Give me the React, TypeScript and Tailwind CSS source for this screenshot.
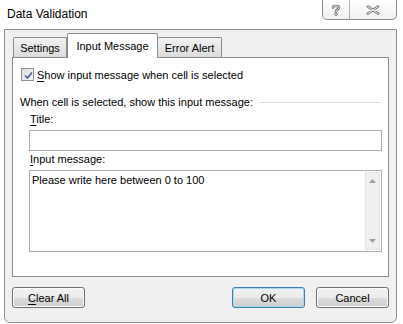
import React from 'react';

function CheckBox() {
  return (
    <div className="w-[13px] h-[13px] border border-[#8f8f8f] bg-gradient-to-br from-[#dcdcdc] to-[#f8f8f8] p-[2px]">
      <svg viewBox="0 0 9 9" className="w-[9px] h-[9px] block">
        <path d="M1 4.5 L3.5 7 L8 1.5" fill="none" stroke="#4a5f97" strokeWidth={1.7} />
      </svg>
    </div>
  );
}

function WinButton({ children, isDefault }: { children: React.ReactNode; isDefault?: boolean }) {
  return (
    <div
      className={`w-[73px] h-[21px] rounded-[3px] border flex items-center justify-center bg-[linear-gradient(#f2f2f2_0%,#ebebeb_50%,#dddddd_51%,#cfcfcf_100%)] ${
        isDefault
          ? 'border-[#3c7fb1] shadow-[inset_0_0_0_1px_#a8d8f0]'
          : 'border-[#707070] shadow-[inset_0_0_0_1px_#fbfbfb]'
      }`}
    >
      {children}
    </div>
  );
}

export default function App() {
  return (
    <div className="w-[403px] h-[324px] bg-white overflow-hidden font-['Liberation_Sans',Arial,sans-serif] text-[11px] leading-[16px] text-black">
      {/* Title bar */}
      <div className="flex h-[29px]">
        <div className="pl-[7px] pt-[6px] text-[12px]">Data Validation</div>
        <div className="ml-auto mr-[6px] flex h-[20px] border border-t-0 border-[#8a8a8a] rounded-b-[5px] bg-[linear-gradient(#ffffff,#f0f0f0)]">
          <div className="w-[27px] border-r border-[#b5b5b5] flex items-center justify-center">
            <svg viewBox="0 0 10 12" className="w-[10px] h-[12px]">
              <path d="M2 3.5 C2 1.5 8 1.5 8 3.8 C8 5.5 5 5.5 5 7.5" fill="none" stroke="#6a6a6a" strokeWidth={2.6} strokeLinecap="round" />
              <path d="M2 3.5 C2 1.5 8 1.5 8 3.8 C8 5.5 5 5.5 5 7.5" fill="none" stroke="#ffffff" strokeWidth={1} strokeLinecap="round" />
              <circle cx="5" cy="10.2" r="1.3" fill="#ffffff" stroke="#6a6a6a" strokeWidth={0.9} />
            </svg>
          </div>
          <div className="w-[46px] flex items-center justify-center">
            <svg viewBox="0 0 14 10" className="w-[14px] h-[10px]">
              <path d="M2 1.5 L12 8.5 M12 1.5 L2 8.5" fill="none" stroke="#6a6a6a" strokeWidth={2.6} strokeLinecap="round" />
              <path d="M2 1.5 L12 8.5 M12 1.5 L2 8.5" fill="none" stroke="#ffffff" strokeWidth={1} strokeLinecap="round" />
            </svg>
          </div>
        </div>
      </div>

      {/* Dialog body */}
      <div className="ml-[4px] mr-[6px] h-[294px] border border-[#8e8f8f] rounded-b-[6px] bg-[#f0f0f0] px-[7px] flex flex-col">
        {/* Tabs */}
        <div className="h-[27px] flex items-end pl-[1px] relative z-10">
          <div className="h-[20px] w-[54px] border border-b-0 border-[#898c95] rounded-t-[2px] bg-[linear-gradient(#f2f2f2,#dcdcdc)] flex items-center justify-center">
            Settings
          </div>
          <div className="h-[25px] w-[91px] -mb-px border border-b-0 border-[#898c95] rounded-t-[2px] bg-white flex items-start justify-center pt-[4px]">
            Input Message
          </div>
          <div className="h-[20px] w-[64px] border border-b-0 border-l-0 border-[#898c95] rounded-t-[2px] bg-[linear-gradient(#f2f2f2,#dcdcdc)] flex items-center justify-center">
            Error Alert
          </div>
        </div>

        {/* Tab pane */}
        <div className="h-[220px] border border-[#898c95] bg-white flex flex-col pl-[7px] pr-[6px]">
          <div className="mt-[10px] h-[13px] flex items-center pl-[1px]">
            <CheckBox />
            <span className="ml-[3px]">
              <u className="underline-offset-2">S</u>how input message when cell is selected
            </span>
          </div>
          <div className="mt-[13px] flex items-center">
            <span>When cell is selected, show this input message:</span>
            <div className="flex-1 ml-[6px] mr-[1px] h-px bg-[#d5dfe5]"></div>
          </div>
          <div className="pl-[10px] mt-[1px]">
            <u className="underline-offset-2">T</u>itle:
          </div>
          <div className="ml-[9px] mt-[3px] h-[21px] border border-[#abadb3] bg-white"></div>
          <div className="pl-[10px]">
            <u className="underline-offset-2">I</u>nput message:
          </div>
          <div className="ml-[9px] mt-[3px] h-[82px] border border-[#abadb3] bg-white flex">
            <div className="flex-1 pl-[2px] pt-[1px]">Please write here between 0 to 100</div>
            <div className="w-[15px] m-px border border-[#e3e3e3] bg-[#f0f0f0] flex flex-col items-center justify-between py-[6px]">
              <svg viewBox="0 0 7 4" className="w-[7px] h-[4px]">
                <path d="M0 4 L3.5 0 L7 4 Z" fill="#a0a0a0" />
              </svg>
              <svg viewBox="0 0 7 4" className="w-[7px] h-[4px]">
                <path d="M0 0 L3.5 4 L7 0 Z" fill="#a0a0a0" />
              </svg>
            </div>
          </div>
        </div>

        {/* Buttons */}
        <div className="mt-[10px] flex">
          <WinButton>
            <span>
              <u className="underline-offset-2">C</u>lear All
            </span>
          </WinButton>
          <div className="ml-auto flex gap-[11px]">
            <WinButton isDefault>OK</WinButton>
            <WinButton>Cancel</WinButton>
          </div>
        </div>
      </div>
    </div>
  );
}
